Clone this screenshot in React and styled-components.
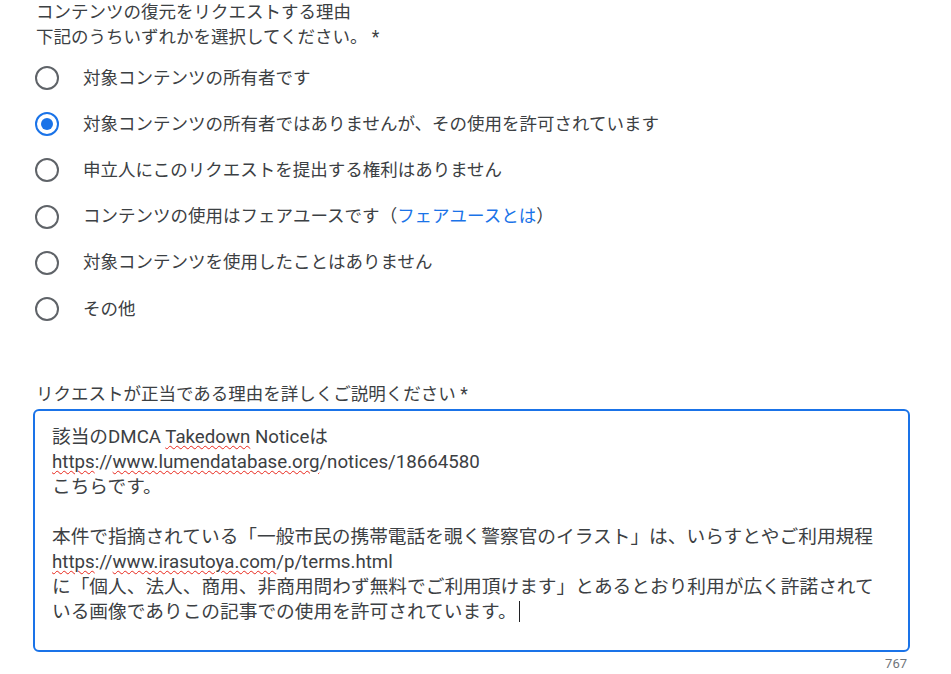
import React from 'react';
import styled, { createGlobalStyle } from 'styled-components';

const reasons = [
  { id: 'owner', label: '対象コンテンツの所有者です' },
  { id: 'licensed', label: '対象コンテンツの所有者ではありませんが、その使用を許可されています' },
  { id: 'noright', label: '申立人にこのリクエストを提出する権利はありません' },
  { id: 'fairuse', label: 'コンテンツの使用はフェアユースです', link: 'フェアユースとは' },
  { id: 'notused', label: '対象コンテンツを使用したことはありません' },
  { id: 'other', label: 'その他' },
];

const App = () => (
  <Page>
    <GlobalStyle />
    <Heading>
      コンテンツの復元をリクエストする理由
      <br />
      下記のうちいずれかを選択してください。 *
    </Heading>
    <RadioList>
      {reasons.map(r => (
        <RadioRow key={r.id}>
          <Radio checked={r.id === 'licensed'} />
          <RadioLabel>
            {r.label}
            {r.link && (
              <>
                （<Link>{r.link}</Link>）
              </>
            )}
          </RadioLabel>
        </RadioRow>
      ))}
    </RadioList>
    <FieldLabel>リクエストが正当である理由を詳しくご説明ください *</FieldLabel>
    <TextBox role="textbox">
      <Line>
        該当のDMCA <Typo>Takedown</Typo> Noticeは
      </Line>
      <Line>
        <Typo>https</Typo>://<Typo>www.lumendatabase.org</Typo>/notices/18664580
      </Line>
      <Line>こちらです。</Line>
      <Line />
      <Line>本件で指摘されている「一般市民の携帯電話を覗く警察官のイラスト」は、いらすとやご利用規程</Line>
      <Line>
        <Typo>https</Typo>://<Typo>www.irasutoya.com</Typo>/p/terms.html
      </Line>
      <Line>に「個人、法人、商用、非商用問わず無料でご利用頂けます」とあるとおり利用が広く許諾されて</Line>
      <Line>
        いる画像でありこの記事での使用を許可されています。
        <Caret />
      </Line>
    </TextBox>
    <Counter>767</Counter>
  </Page>
);

export default App;

const GlobalStyle = createGlobalStyle`
  body {
    margin: 0;
    background: #fff;
    font-family: Roboto, "Noto Sans CJK JP", sans-serif;
    color: #3c4043;
  }
`;
const Page = styled.div`
  width: 877px;
  padding-left: 33px;
`;
const Heading = styled.div`
  padding-left: 3px;
  font-size: 17.5px;
  line-height: 25px;
`;
const RadioList = styled.div`
  display: flex;
  flex-direction: column;
  margin-top: 5px;
`;
const RadioRow = styled.label`
  display: flex;
  align-items: center;
  height: 46.2px;
  padding-left: 2px;
  gap: 24px;
`;
const Radio = styled.span`
  box-sizing: border-box;
  width: 24px;
  height: 24px;
  border-radius: 50%;
  border: 2.5px solid ${({ checked }) => (checked ? '#1a73e8' : '#5f6368')};
  display: flex;
  align-items: center;
  justify-content: center;
  &::after {
    content: '';
    width: 12px;
    height: 12px;
    border-radius: 50%;
    background: ${({ checked }) => (checked ? '#1a73e8' : 'transparent')};
  }
`;
const RadioLabel = styled.span`
  font-size: 17.5px;
  line-height: 25px;
  color: #3c4043;
`;
const Link = styled.a`
  color: #1a73e8;
  text-decoration: none;
`;
const FieldLabel = styled.div`
  margin-top: 50px;
  padding-left: 3px;
  font-size: 17.5px;
  line-height: 25px;
`;
const TextBox = styled.div`
  margin-top: 2px;
  box-sizing: border-box;
  height: 243px;
  border: 2px solid #1a73e8;
  border-radius: 6px;
  padding: 14px 17px;
  font-size: 18.7px;
  line-height: 25px;
  color: #3c4043;
`;
const Line = styled.div`
  height: 25px;
  white-space: nowrap;
`;
const Typo = styled.span`
  text-decoration: underline wavy #e8261b;
  text-decoration-thickness: 1px;
  text-underline-offset: 2px;
`;
const Caret = styled.span`
  display: inline-block;
  width: 1px;
  height: 21px;
  margin-left: 2px;
  vertical-align: -4px;
  background: #202124;
`;
const Counter = styled.div`
  text-align: right;
  padding-right: 3px;
  margin-top: 4px;
  font-size: 13px;
  color: #70757a;
`;
